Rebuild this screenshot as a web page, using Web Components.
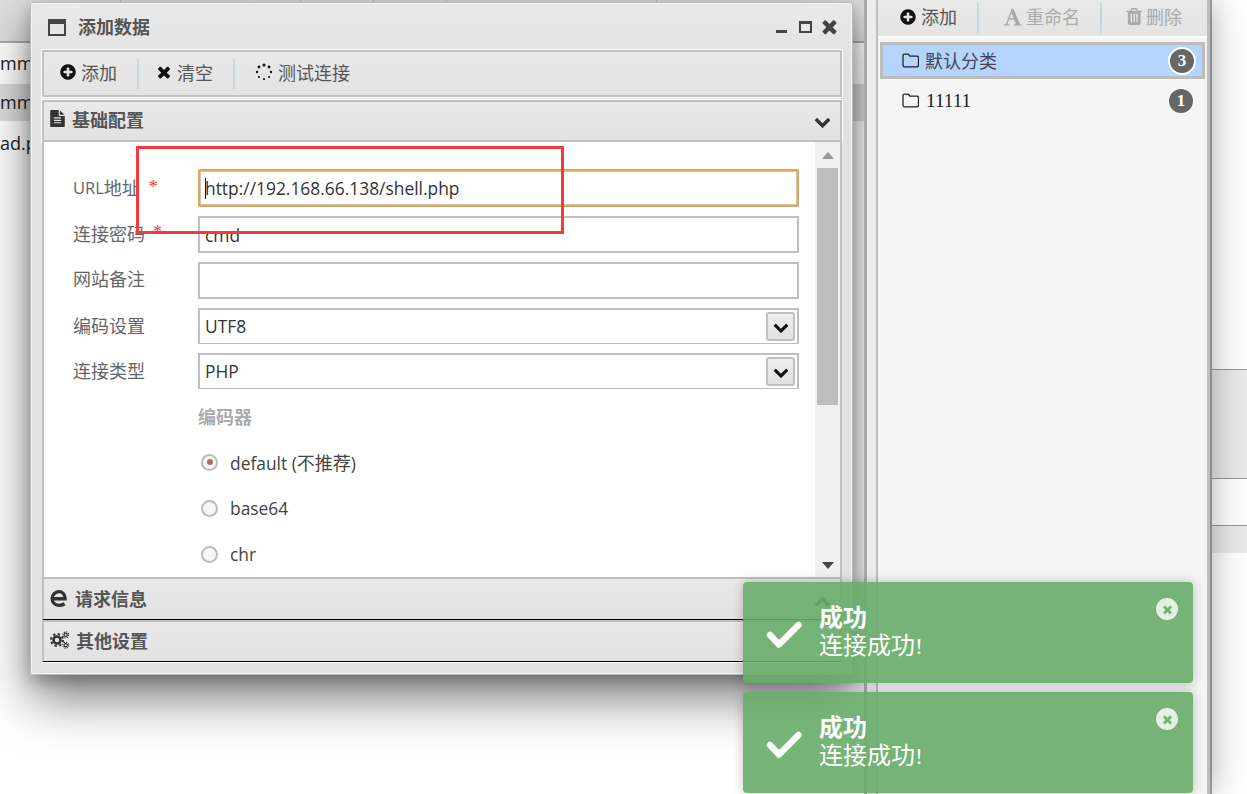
<!DOCTYPE html>
<html>
<head>
<meta charset="utf-8">
<title>添加数据</title>
<style>
html,body{margin:0;padding:0;background:#fff;overflow:hidden}
</style>
</head>
<body>
<desk-page>
  <back-list slot="left">
    <app-modal>
      <win-title slot="title">添加数据</win-title>
      <tool-bar>
        <tool-btn icon="plus" pl="15">添加</tool-btn><tool-sep></tool-sep>
        <tool-btn icon="times" pl="16">清空</tool-btn><tool-sep></tool-sep>
        <tool-btn icon="spinner" pl="17">测试连接</tool-btn>
      </tool-bar>
      <acc-head icon="file" chev="down" open>基础配置</acc-head>
      <form-pane>
        <form-row latin="URL" label="地址" star="10" h="38" lift="2"><text-field focus>http://192.168.66.138/shell.php</text-field></form-row>
        <form-row label="连接密码" star="9" h="37" lift="4"><text-field>cmd</text-field></form-row>
        <form-row label="网站备注" h="37" lift="6"><text-field></text-field></form-row>
        <form-row label="编码设置" h="36" lift="2"><select-field>UTF8</select-field></form-row>
        <form-row label="连接类型" h="36" lift="2"><select-field>PHP</select-field></form-row>
        <radio-group label="编码器">
          <radio-opt checked>default (<span style="font-size:18px">不推荐</span>)</radio-opt>
          <radio-opt>base64</radio-opt>
          <radio-opt>chr</radio-opt>
        </radio-group>
      </form-pane>
      <acc-head icon="edge" chev="up" tall>请求信息</acc-head>
      <acc-head icon="gears">其他设置</acc-head>
    </app-modal>
  </back-list>
  <side-panel slot="side">
    <tool-bar slot="tools" plain>
      <tool-btn icon="plus" pl="21">添加</tool-btn><tool-sep></tool-sep>
      <tool-btn icon="font" pl="23" off>重命名</tool-btn><tool-sep></tool-sep>
      <tool-btn icon="trash" pl="23" off>删除</tool-btn>
    </tool-bar>
    <cat-item count="3" active>默认分类</cat-item>
    <cat-item count="1">11111</cat-item>
  </side-panel>
  <back-rows slot="right"></back-rows>
  <red-box></red-box>
  <toast-stack>
    <toast-item title="成功">连接成功!</toast-item>
    <toast-item title="成功">连接成功!</toast-item>
  </toast-stack>
</desk-page>

<script>
const CJK_SERIF = '"Liberation Serif","Noto Sans CJK SC",serif';
const CJK_SANS = '"Open Sans","Noto Sans CJK SC",sans-serif';

const ICONS = {
  plus: ['0 0 1792 1792','<path d="M1344 960v-128q0-26-19-45t-45-19h-256v-256q0-26-19-45t-45-19h-128q-26 0-45 19t-19 45v256h-256q-26 0-45 19t-19 45v128q0 26 19 45t45 19h256v256q0 26 19 45t45 19h128q26 0 45-19t19-45v-256h256q26 0 45-19t19-45zm320-64q0 209-103 385.500t-279.500 279.500-385.500 103-385.500-103-279.500-279.500-103-385.500 103-385.500 279.500-279.500 385.500-103 385.500 103 279.500 279.500 103 385.500z"/>'],
  times: ['0 0 1792 1792','<path d="M1490 1322q0 40-28 68l-136 136q-28 28-68 28t-68-28l-294-294-294 294q-28 28-68 28t-68-28l-136-136q-28-28-28-68t28-68l294-294-294-294q-28-28-28-68t28-68l136-136q28-28 68-28t68 28l294 294 294-294q28-28 68-28t68 28l136 136q28 28 28 68t-28 68l-294 294 294 294q28 28 28 68z"/>'],
  down: ['0 0 1792 1792','<path d="M1683 808l-742 741q-19 19-45 19t-45-19l-742-741q-19-19-19-45.500t19-45.500l166-165q19-19 45-19t45 19l531 531 531-531q19-19 45-19t45 19l166 165q19 19 19 45.500t-19 45.500z"/>'],
  up: ['0 0 1792 1792','<path d="M1683 1331l-166 165q-19 19-45 19t-45-19l-531-531-531 531q-19 19-45 19t-45-19l-166-165q-19-19-19-45.500t19-45.500l742-741q19-19 45-19t45 19l742 741q19 19 19 45.500t-19 45.500z"/>'],
  check: ['0 0 36 30','<path d="M4 15l9 9.500L32.500 5" fill="none" stroke="currentColor" stroke-width="6.500" stroke-linecap="round" stroke-linejoin="round"/>'],
  file: ['128 0 1536 1792','<path d="M1596 476q14 14 28 36h-472v-472q22 14 36 28zm-476 164h544v1056q0 40-28 68t-68 28h-1344q-40 0-68-28t-28-68v-1600q0-40 28-68t68-28h800v544q0 40 28 68t68 28zm160 736v-64q0-14-9-23t-23-9h-704q-14 0-23 9t-9 23v64q0 14 9 23t23 9h704q14 0 23-9t9-23zm0-256v-64q0-14-9-23t-23-9h-704q-14 0-23 9t-9 23v64q0 14 9 23t23 9h704q14 0 23-9t9-23zm0-256v-64q0-14-9-23t-23-9h-704q-14 0-23 9t-9 23v64q0 14 9 23t23 9h704q14 0 23-9t9-23z"/>'],
  font: ['0 0 1664 1792','<path d="M789 559l-170 450q33 0 136.500 2t160.500 2q19 0 57-2-87-253-184-452zm-725 1105l2-79q23-7 56-12.500t57-10.500 49.500-14.500 44.500-29 31-50.500l237-616 280-724h128q8 14 11 21l205 480q33 78 106 257.500t114 274.500q15 34 58 144.500t72 168.500q20 45 35 57 19 15 88 29.500t84 20.500q6 38 6 57 0 4-.5 13t-.5 13q-63 0-190-8t-191-8q-76 0-215 7t-178 8q0-43 4-78l131-28q1 0 12.500-2.500t15.500-3.500 14.500-4.500 15-6.500 11-8 9-11 2.500-14q0-16-31-96.500t-72-177.500-42-100l-450-2q-26 58-76.500 195.500t-50.500 162.500q0 22 14 37.500t43.500 24.500 48.500 13.500 57 8.500 41 4q1 19 1 58 0 9-2 27-58 0-174.500-10t-174.500-10q-8 0-26.500 4t-21.500 4q-80 14-188 14z"/>'],
  trash: ['128 128 1408 1536','<path d="M704 1376v-704q0-14-9-23t-23-9h-64q-14 0-23 9t-9 23v704q0 14 9 23t23 9h64q14 0 23-9t9-23zm256 0v-704q0-14-9-23t-23-9h-64q-14 0-23 9t-9 23v704q0 14 9 23t23 9h64q14 0 23-9t9-23zm256 0v-704q0-14-9-23t-23-9h-64q-14 0-23 9t-9 23v704q0 14 9 23t23 9h64q14 0 23-9t9-23zm-544-992h448l-48-117q-7-9-17-11h-317q-10 2-17 11zm928 32v64q0 14-9 23t-23 9h-96v948q0 83-47 143.500t-113 60.500h-832q-66 0-113-58.500t-47-141.500v-952h-96q-14 0-23-9t-9-23v-64q0-14 9-23t23-9h309l70-167q15-37 54-63t79-26h320q40 0 79 26t54 63l70 167h309q14 0 23 9t9 23z"/>'],
  spinner: ['-3 0 22 18','<circle cx="9" cy="2" r="1.500"/><circle cx="14" cy="4" r="1.400"/><circle cx="16" cy="9" r="1.200"/><circle cx="14" cy="14" r="1.100"/><circle cx="9" cy="16" r="1.100"/><circle cx="4" cy="14" r="1.100"/><circle cx="2" cy="9" r="1.200"/><circle cx="4" cy="4" r="1.400"/>'],
  edge: ['0 0 16 16','<path d="M2.400 8.700h11c0-4-2.300-6.400-5.500-6.400S1.900 5 1.900 8.500s2.600 6 6 6c2.100 0 3.700-.5 5.100-1.400" fill="none" stroke="currentColor" stroke-width="3"/>'],
  gears: ['0 0 20 18','<g fill="none" stroke="currentColor"><circle cx="7" cy="9" r="3.500" stroke-width="2.600"/><circle cx="7" cy="9" r="6" stroke-width="2" stroke-dasharray="2.400 2.300"/><circle cx="15.700" cy="3.800" r="1.600" stroke-width="1.200"/><circle cx="15.700" cy="3.800" r="3" stroke-width="1.100" stroke-dasharray="1.200 1.150"/><circle cx="15.700" cy="14.200" r="1.600" stroke-width="1.200"/><circle cx="15.700" cy="14.200" r="3" stroke-width="1.100" stroke-dasharray="1.200 1.150"/></g>'],
  folder: ['0 0 17 15','<path d="M1 3c0-1 .6-1.800 1.600-1.800h3.200c.8 0 1.100.6 1.500 1.200l.5.800h7c1 0 1.700.7 1.700 1.700v7.300c0 1-.7 1.700-1.700 1.700H2.700C1.700 13.900 1 13.200 1 12.200z" fill="none" stroke="currentColor" stroke-width="1.300"/>']
};
function svg(name, w, h){
  const [box, body] = ICONS[name];
  return `<svg xmlns="http://www.w3.org/2000/svg" width="${w}" height="${h || w}" viewBox="${box}" fill="currentColor" style="display:block;flex:none">${body}</svg>`;
}

// small helper, every element below is the same shape
function define(tag, css, html, setup){
  customElements.define(tag, class extends HTMLElement {
    constructor(){
      super();
      this.attachShadow({mode:'open'});
    }
    connectedCallback(){
      const body = typeof html === 'function' ? html(this) : html;
      this.shadowRoot.innerHTML = `<style>${css}</style>${body}`;
      if (setup) setup(this);
    }
  });
}

define('desk-page', `
  :host{display:grid;grid-template-columns:867px 9px 334px 37px;width:1247px;height:794px;position:relative;overflow:hidden;background:#ececec}
  .l{grid-column:1;min-height:0} .s{grid-column:3;min-height:0;z-index:2} .r{grid-column:4;min-height:0}
`, `<div class="l"><slot name="left"></slot></div><div class="s"><slot name="side"></slot></div><div class="r"><slot name="right"></slot></div><slot></slot>`);

define('back-list', `
  :host{display:flex;flex-direction:column;height:794px;position:relative;overflow:hidden;background:#fff;
    border-right:3px solid #aaa;box-sizing:border-box;font:18px "Open Sans",sans-serif;color:#222}
  .head{height:41px;background:#ddd;border-bottom:2px solid #aaa;display:flex;flex:none}
  .head i{display:block;height:3px;border-right:1px solid #bbb}
  .row{padding-bottom:2px;box-sizing:border-box;display:flex;align-items:center;flex:none;overflow:hidden;white-space:nowrap}
  .a{height:41px}.b{height:37px;background:#ddd}.c{height:46px;}
`, `<div class="head"><i style="width:120px"></i><i style="width:179px"></i><i style="width:72px"></i><i style="width:72px"></i><i style="width:209px"></i></div>
  <div class="row a">mm</div><div class="row b">mm</div><div class="row c">ad.p</div><slot></slot>`);

define('app-modal', `
  :host{position:absolute;left:30px;top:2px;width:823px;height:673px;box-sizing:border-box;display:flex;flex-direction:column;
    border:2px solid #f4f4f4;outline:1px solid #bbb;outline-offset:-1px;border-radius:3px;
    background:linear-gradient(#e9e9e9,#e2e2e2 60px,#e2e2e2);
    box-shadow:0 24px 50px rgba(0,0,0,.5),0 6px 16px rgba(0,0,0,.25)}
  .body{padding:0 9px 0 10px;display:flex;flex-direction:column}
`, `<slot name="title"></slot><div class="body"><slot></slot></div>`);

define('win-title', `
  :host{display:flex;align-items:center;height:46px;box-sizing:border-box;padding:0 11px 2px 16px;flex:none;color:#555;font:bold 18px ${CJK_SERIF}}
  .w{width:18px;height:17px;box-sizing:border-box;border:2px solid #444;border-top-width:5px;margin:3px 12px 0 0;flex:none}
  .t{flex:1}
  .btns{display:flex;align-items:center;color:#444}
  .min{width:11px;height:3px;background:#444;margin:11px 12px 0 0}
  .max{width:13px;height:12px;box-sizing:border-box;border:2px solid #444;border-top-width:3px;margin:1px 7px 0 0}
`, () => `<div class="w"></div><div class="t"><slot></slot></div><div class="btns"><div class="min"></div><div class="max"></div>${svg('times',21)}</div>`);

define('tool-bar', `
  :host{display:flex;align-items:center;height:47px;box-sizing:border-box;margin-bottom:3px;flex:none;padding-bottom:0;
    border:2px solid #c0c0c0;box-shadow:0 0 0 1px #fff;background:linear-gradient(#e9e9e9,#e3e3e3)}
  :host([plain]){height:38px;margin:0;border:0;box-shadow:none;border-bottom:2px solid #fff}
`, `<slot></slot>`);

define('tool-btn', `
  :host{display:flex;align-items:center;gap:4px;padding:0 20px 0 var(--pl,18px);color:#555;font:18px ${CJK_SERIF};white-space:nowrap;height:100%;box-sizing:border-box}
  :host([off]){color:#aaa}
  .i{color:#111;display:block}
  :host([off]) .i{color:#aaa}
  .t{margin-top:-4px}
`, (el) => {
  const n = el.getAttribute('icon');
  if (el.getAttribute('pl')) el.style.setProperty('--pl', el.getAttribute('pl') + 'px');
  const size = {plus:18,times:18,font:20,trash:17}[n];
  const w = n === 'spinner' ? 22 : size, h = n === 'spinner' ? 18 : size;
  return `<div class="i" style="margin-top:-3px">${svg(n,w,h)}</div><div class="t"><slot></slot></div>`;
});

define('tool-sep', `:host{display:block;width:2px;height:30px;background:#c6d6de;flex:none}`, ``);

define('acc-head', `
  :host{display:flex;align-items:center;height:42px;box-sizing:border-box;padding:0 9px 3px 6px;flex:none;gap:7px;
    border:solid #c0c0c0;border-width:2px 2px 0 2px;background:linear-gradient(#e9e9e9,#e2e2e2);
    border-bottom:1px solid #000;color:#555;font:bold 18px ${CJK_SERIF};box-shadow:0 1px 0 #fff}
  :host([open]){border-bottom:2px solid #c0c0c0;box-shadow:0 0 0 1px #fff;border-top-width:2px;padding-bottom:5px}
  :host([tall]){height:43px}
  .i{color:#333;flex:none}
  .t{flex:1}
  .c{color:#333;margin-top:6px}
`, (el) => {
  const n = el.getAttribute('icon');
  const w = {file:15,edge:18,gears:20}[n], h = {file:17,edge:18,gears:18}[n];
  const c = el.getAttribute('chev');
  return `<div class="i" style="${n === 'gears' ? 'margin-right:-1px' : ''}">${svg(n,w,h)}</div><div class="t"><slot></slot></div>${c ? `<div class="c">${svg(c,17)}</div>` : ''}`;
});

define('form-pane', `
  :host{display:flex;height:435px;box-sizing:border-box;background:#fff;border:solid #c0c0c0;border-width:0 2px;flex:none;overflow:hidden}
  .f{flex:1;box-sizing:border-box;padding:27px 16px 0 29px;display:flex;flex-direction:column;gap:9px;min-width:0;font:17.400px ${CJK_SANS}}
  .sb{width:25px;flex:none;background:#f1f1f1;display:flex;flex-direction:column;align-items:center;box-sizing:border-box}
  .up{width:0;height:0;border:6px solid transparent;border-top:0;border-bottom:7px solid #999;margin:10px 0 9px}
  .th{width:21px;height:237px;background:#bdbdbd}
  .sp{flex:1}
  .dn{width:0;height:0;border:6px solid transparent;border-bottom:0;border-top:7px solid #444;margin-bottom:8px}
`, `<div class="f"><slot></slot></div><div class="sb"><div class="up"></div><div class="th"></div><div class="sp"></div><div class="dn"></div></div>`);

define('form-row', `
  :host{display:grid;grid-template-columns:125px 1fr;align-items:center;flex:none;height:var(--h,37px)}
  .l{color:#666;white-space:nowrap;display:flex;align-items:center;font-size:18px;box-sizing:border-box}
  .lat{font-size:16.500px}
  .s{color:#f33;font-family:"Liberation Serif",serif}
`, (el) => {
  el.style.setProperty('--h', el.getAttribute('h') + 'px');
  const star = el.getAttribute('star');
  const lat = el.getAttribute('latin');
  return `<div class="l" style="padding-bottom:${el.getAttribute('lift') || 0}px">${lat ? `<span class="lat">${lat}</span>` : ''}${el.getAttribute('label')}${star ? `<span class="s" style="margin-left:${star - 1}px">*</span>` : ''}</div><slot></slot>`;
});

define('text-field', `
  :host{display:flex;align-items:center;height:100%;box-sizing:border-box;border:2px solid #bfbfbf;background:#fff;padding-left:5px;color:#333;position:relative;
    font:17.400px "Open Sans",sans-serif;white-space:nowrap}
  :host([focus]){border-color:#e5a54b;box-shadow:inset 0 0 0 1px #c8c8c8;border-radius:2px}
  .caret{position:absolute;left:5px;top:7px;bottom:6px;width:1px;background:#111}
`, (el) => `${el.hasAttribute('focus') ? '<div class="caret"></div>' : ''}<slot></slot>`);

define('select-field', `
  :host{display:flex;align-items:center;height:100%;box-sizing:border-box;border:2px solid #bfbfbf;border-bottom-width:1px;background:#fff;padding:0 2px 0 5px;color:#333;
    font:17.400px "Open Sans",sans-serif}
  .t{flex:1;margin-top:-2px}
  .b{width:29px;height:29px;box-sizing:border-box;border:2px solid #c0c0c0;border-radius:3px;background:linear-gradient(#eee,#e2e2e2);display:flex;align-items:center;justify-content:center;color:#111}
`, () => `<div class="t"><slot></slot></div><div class="b">${svg('down',16)}</div>`);

define('radio-group', `
  :host{display:block;margin:6px 0 0 125px;flex:none}
  .h{height:28px;line-height:24px;color:#aaa;font-weight:bold;margin-bottom:7px;font-size:18px;font-family:"Noto Sans CJK SC",sans-serif;}
`, (el) => `<div class="h">${el.getAttribute('label')}</div><slot></slot>`);

define('radio-opt', `
  :host{display:flex;align-items:center;height:46px;gap:12px;padding-left:3px;color:#444}
  .r{width:17px;height:17px;box-sizing:border-box;border:2px solid #bbb;border-radius:50%;background:#f6f6f6;display:flex;align-items:center;justify-content:center;flex:none}
  .d{width:6px;height:6px;border-radius:50%;background:#b06a6a}
`, (el) => `<div class="r">${el.hasAttribute('checked') ? '<div class="d"></div>' : ''}</div><div><slot></slot></div>`);

define('side-panel', `
  :host{display:block;height:794px;box-sizing:border-box;border:solid #bdbdbd;border-width:0 3px 0 2px;background:#f5f5f5;
    box-shadow:0 0 34px rgba(0,0,0,.36);clip-path:inset(0 -60px 0 0)}
  .list{padding:4px 2px 0 2px}
`, `<slot name="tools"></slot><div class="list"><slot></slot></div>`);

define('cat-item', `
  :host{display:flex;align-items:center;height:37px;box-sizing:border-box;padding:0 12px 0 22px;margin-bottom:3px;gap:7px;color:#222;
    font:18px ${CJK_SERIF}}
  :host([active]){background:#b5d4fd;border:3px solid #bdbdbd;padding:0 8px 0 19px;color:#445;gap:6px}
  .i{color:#222}
  .t{flex:1;font-size:19.200px}
  :host([active]) .t{font-size:18px;margin-top:-1px}
  .n{width:24px;height:24px;border-radius:50%;background:#666;color:#fff;font:bold 17px "Liberation Serif",serif;display:flex;align-items:center;justify-content:center;flex:none;box-sizing:content-box}
  :host([active]) .n{border:2px solid #fff;margin:-2px -2px -2px 0;}
`, (el) => `<div class="i">${svg('folder',17,15)}</div><div class="t"><slot></slot></div><div class="n">${el.getAttribute('count')}</div>`);

define('back-rows', `
  :host{display:flex;flex-direction:column;height:794px;box-sizing:border-box;border-left:2px solid #aaa;background:#fff}
  .a{flex:none;box-sizing:border-box;border-bottom:1px solid #999}
  .band{background:#e9e9e9}
`, `<div class="a" style="height:370px"></div><div class="a band" style="height:109px"></div><div class="a" style="height:47px"></div><div class="a band" style="height:27px;border:0"></div>`);

define('red-box', `
  :host{position:absolute;left:136px;top:146px;width:428px;height:88px;box-sizing:border-box;border:3px solid #f43a3a;z-index:5}
`, ``);

define('toast-stack', `
  :host{position:absolute;left:743px;top:582px;width:450px;display:flex;flex-direction:column;gap:9px;z-index:6}
`, `<slot></slot>`);

define('toast-item', `
  :host{display:flex;position:relative;height:101px;box-sizing:border-box;padding:22px 0 0 23px;border-radius:4px;gap:17px;
    background:rgba(104,172,104,.9);box-shadow:0 0 12px rgba(0,0,0,.24);color:#fff;font:24px/28px ${CJK_SERIF}}
  .i{margin-top:16px;opacity:.97}
  .t{font-weight:bold}
  .x{position:absolute;right:15px;top:16px;width:22px;height:22px;border-radius:50%;background:rgba(255,255,255,.8);color:#74b274;display:flex;align-items:center;justify-content:center}
`, (el) => `<div class="i">${svg('check',36,30)}</div><div><div class="t">${el.getAttribute('title')}</div><slot></slot></div><div class="x">${svg('times',13)}</div>`);
</script>
</body>
</html>
